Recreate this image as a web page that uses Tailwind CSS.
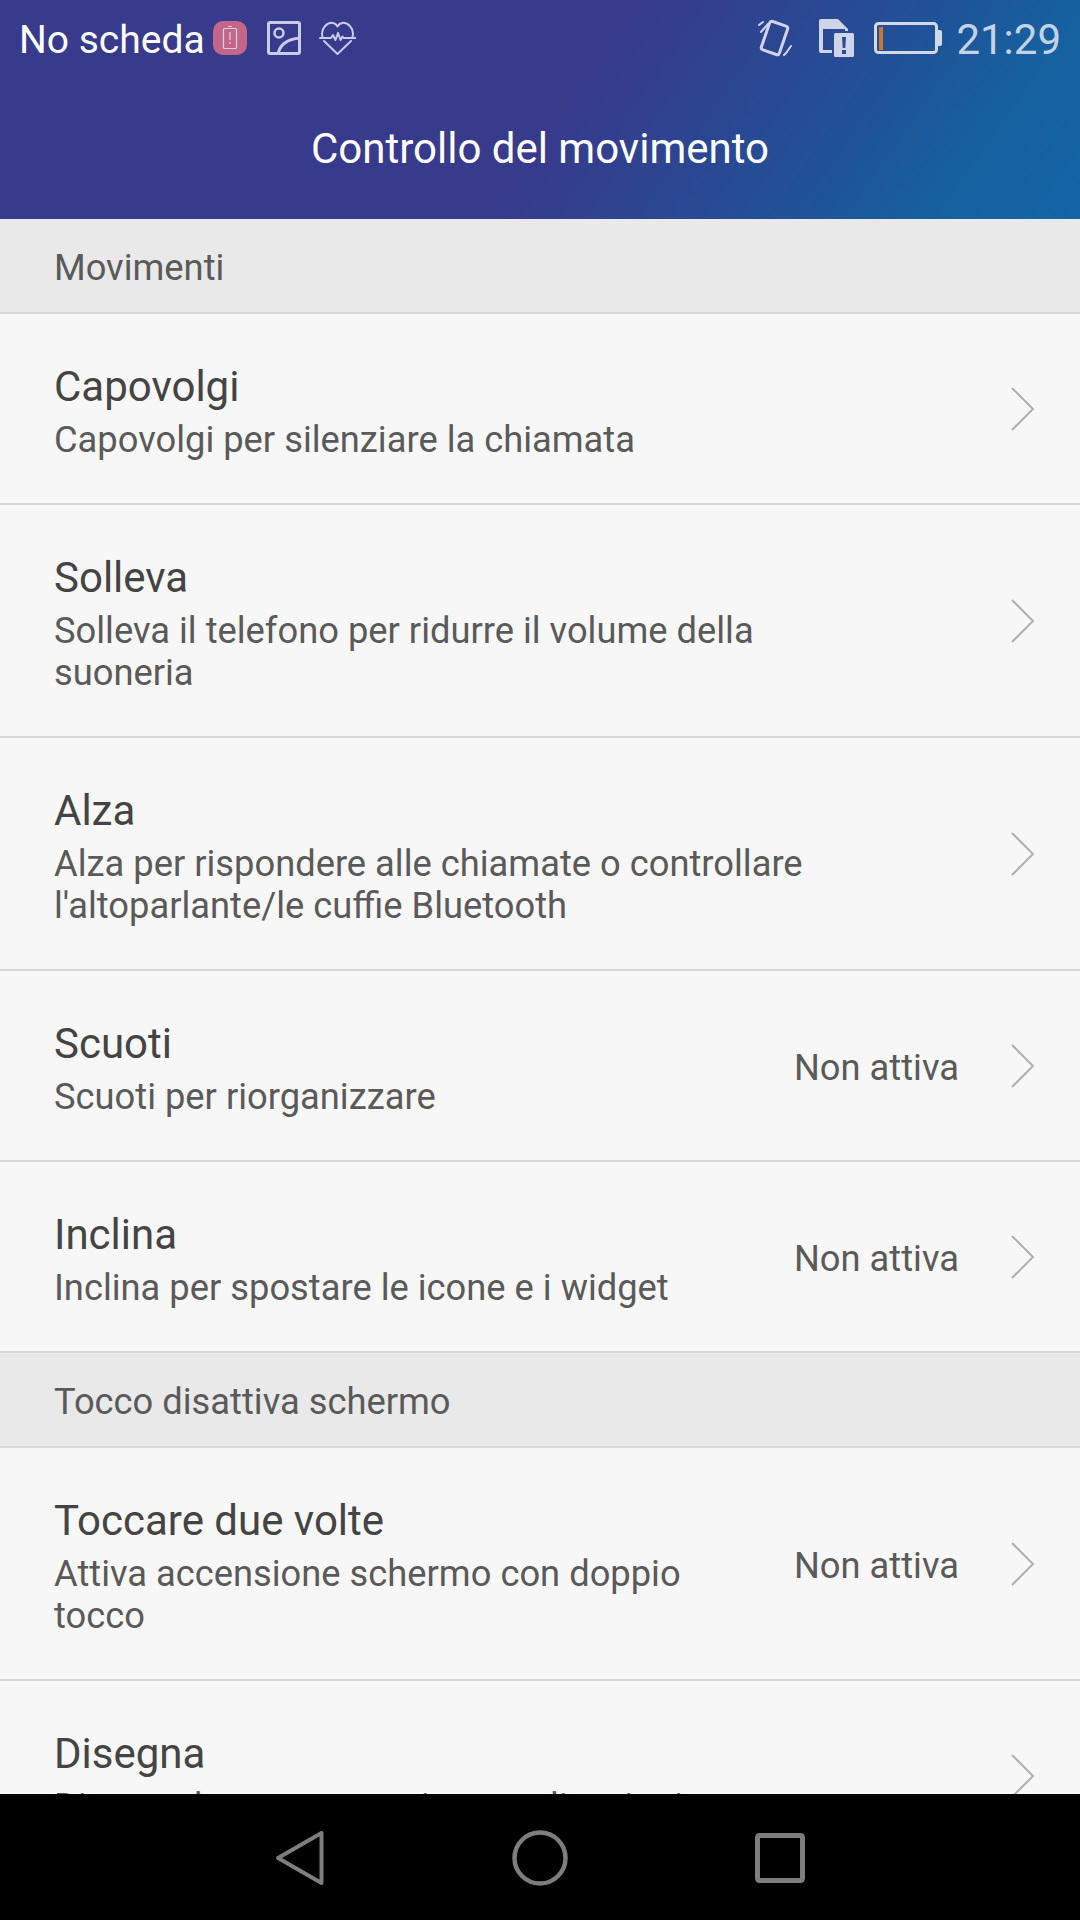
<!DOCTYPE html>
<html>
  <head>
    <meta charset="UTF-8">
    <title>Controllo del movimento</title>
    <script src="https://cdn.jsdelivr.net/npm/@tailwindcss/browser@4"></script>
  </head>
  <body>
    <div class="w-[1080px] h-[1920px] flex flex-col overflow-hidden bg-[#f7f7f7] font-['Roboto',sans-serif]">
      <!-- header -->
      <div class="h-[219px] shrink-0 bg-[linear-gradient(125deg,#383a8c_52%,#274b94_70%,#1e5599_79%,#17609f_87%,#1465a6_100%)]">
        <div class="h-[76px] flex items-center pl-[19px] pr-[19px]">
          <span class="text-[39px] leading-none text-white translate-y-[2px]">No scheda</span>
          <svg class="ml-[8px]" width="34" height="34" viewBox="0 0 34 34" fill="none">
            <rect width="34" height="34" rx="10" fill="#c4668a"/>
            <rect x="10.500" y="7.500" width="13" height="20" rx="1" stroke="#cfd3e8" stroke-width="1.200"/>
            <path d="M15 5.500h4M17 11v8M17 21v2" stroke="#cfd3e8" stroke-width="1.200"/>
          </svg>
          <svg class="ml-[20px]" width="34" height="34" viewBox="0 0 34 34" fill="none" stroke="#c8cce6" stroke-width="3">
            <rect x="1.500" y="1.500" width="31" height="31" rx="1.500"/>
            <circle cx="12" cy="12" r="4.500" stroke-width="2.500"/>
            <path d="M11 33c2-10 10-15 22-16"/>
          </svg>
          <svg class="ml-[18px]" width="37" height="34" viewBox="0 0 37 34" fill="none" stroke="#c8cce6" stroke-width="2" stroke-linecap="round" stroke-linejoin="round">
            <path d="M3.500 16C1 7 9 1 14 2c2 .4 3.500 1.500 4.500 3.500C19.500 3.500 21 2.400 23 2c5-1 13 5 10.500 14M5 20l13.500 13L32 20"/>
            <path d="M1 17h11l2-3 2.500 5 2.500-7 2.500 7 2-3.500 1 1.500h12"/>
          </svg>
          <svg class="ml-auto" width="34" height="40" viewBox="0 0 34 40" fill="none" stroke="#cfd4e8" stroke-linecap="round">
            <rect x="7" y="5" width="19" height="30" rx="2.500" transform="rotate(19 16.500 20)" stroke-width="3"/>
            <path d="M1 7l4-3M3 14l7-8M28 35l5-7M26 37l3-3" stroke-width="2"/>
          </svg>
          <svg class="ml-[27px]" width="35" height="39" viewBox="0 0 35 39">
            <path fill="#cfd4e8" fill-rule="evenodd" d="M2 0h17l10 10v22a2 2 0 0 1-2 2H2a2 2 0 0 1-2-2V2a2 2 0 0 1 2-2zM4 10v21h22V10z"/>
            <rect x="13" y="12" width="22" height="27" rx="2" fill="#294c94"/>
            <rect x="15" y="14" width="20" height="24" rx="1.500" fill="#cfd4e8"/>
            <path fill="#294c94" d="M23 18h4l-.7 11h-2.600zM23 31h4v4h-4z"/>
          </svg>
          <svg class="ml-[20px]" width="68" height="32" viewBox="0 0 68 32" fill="none">
            <rect x="1.500" y="1.500" width="61" height="29" rx="3" stroke="#cfd9ea" stroke-width="3"/>
            <path d="M64 8h2a2 2 0 0 1 2 2v12a2 2 0 0 1-2 2h-2z" fill="#cfd9ea"/>
            <rect x="5" y="5" width="4" height="23" fill="#c87a28"/>
          </svg>
          <span class="ml-[14px] text-[42px] leading-none text-[#c3d3e6] translate-y-[2px]">21:29</span>
        </div>
        <div class="h-[143px] flex items-start justify-center pt-[49px]">
          <span class="text-[42px] leading-[48px] text-white">Controllo del movimento</span>
        </div>
      </div>

      <!-- list -->
      <div class="flex-1 overflow-hidden">
        <div class="h-[95px] flex items-center pl-[54px] pt-[6px] bg-[#e9e9e9] border-b-2 border-[#d8d8d8] text-[36.3px] text-[#5a5a5a]">Movimenti</div>

        <div class="flex items-center pl-[54px] pr-[45px] pt-[47px] pb-[42px] border-b-2 border-[#d8d8d8]">
          <div class="flex-1 max-w-[770px]">
            <div class="text-[42px] leading-[52px] text-[#444444]">Capovolgi</div>
            <div class="mt-[6px] text-[36.3px] leading-[42px] text-[#5a5a5a]">Capovolgi per silenziare la chiamata</div>
          </div>
          <svg class="ml-auto -translate-y-[2px]" width="24" height="44" viewBox="0 0 24 44" fill="none" stroke="#b0b0b0" stroke-width="2"><path d="M1 1l21 21L1 43"/></svg>
        </div>

        <div class="flex items-center pl-[54px] pr-[45px] pt-[47px] pb-[42px] border-b-2 border-[#d8d8d8]">
          <div class="flex-1 max-w-[770px]">
            <div class="text-[42px] leading-[52px] text-[#444444]">Solleva</div>
            <div class="mt-[6px] text-[36.3px] leading-[42px] text-[#5a5a5a]">Solleva il telefono per ridurre il volume della suoneria</div>
          </div>
          <svg class="ml-auto -translate-y-[2px]" width="24" height="44" viewBox="0 0 24 44" fill="none" stroke="#b0b0b0" stroke-width="2"><path d="M1 1l21 21L1 43"/></svg>
        </div>

        <div class="flex items-center pl-[54px] pr-[45px] pt-[47px] pb-[42px] border-b-2 border-[#d8d8d8]">
          <div class="flex-1 max-w-[770px]">
            <div class="text-[42px] leading-[52px] text-[#444444]">Alza</div>
            <div class="mt-[6px] text-[36.3px] leading-[42px] text-[#5a5a5a]">Alza per rispondere alle chiamate o controllare l'altoparlante/le cuffie Bluetooth</div>
          </div>
          <svg class="ml-auto -translate-y-[2px]" width="24" height="44" viewBox="0 0 24 44" fill="none" stroke="#b0b0b0" stroke-width="2"><path d="M1 1l21 21L1 43"/></svg>
        </div>

        <div class="flex items-center pl-[54px] pr-[45px] pt-[47px] pb-[42px] border-b-2 border-[#d8d8d8]">
          <div class="w-[700px]">
            <div class="text-[42px] leading-[52px] text-[#444444]">Scuoti</div>
            <div class="mt-[6px] text-[36.3px] leading-[42px] text-[#5a5a5a]">Scuoti per riorganizzare</div>
          </div>
          <span class="ml-auto text-[36.3px] text-[#5a5a5a]">Non attiva</span>
          <svg class="ml-[52px] -translate-y-[2px]" width="24" height="44" viewBox="0 0 24 44" fill="none" stroke="#b0b0b0" stroke-width="2"><path d="M1 1l21 21L1 43"/></svg>
        </div>

        <div class="flex items-center pl-[54px] pr-[45px] pt-[47px] pb-[42px] border-b-2 border-[#d8d8d8]">
          <div class="w-[700px]">
            <div class="text-[42px] leading-[52px] text-[#444444]">Inclina</div>
            <div class="mt-[6px] text-[36.3px] leading-[42px] text-[#5a5a5a]">Inclina per spostare le icone e i widget</div>
          </div>
          <span class="ml-auto text-[36.3px] text-[#5a5a5a]">Non attiva</span>
          <svg class="ml-[52px] -translate-y-[2px]" width="24" height="44" viewBox="0 0 24 44" fill="none" stroke="#b0b0b0" stroke-width="2"><path d="M1 1l21 21L1 43"/></svg>
        </div>

        <div class="h-[95px] flex items-center pl-[54px] pt-[6px] bg-[#e9e9e9] border-b-2 border-[#d8d8d8] text-[36.3px] text-[#5a5a5a]">Tocco disattiva schermo</div>

        <div class="flex items-center pl-[54px] pr-[45px] pt-[47px] pb-[42px] border-b-2 border-[#d8d8d8]">
          <div class="w-[700px]">
            <div class="text-[42px] leading-[52px] text-[#444444]">Toccare due volte</div>
            <div class="mt-[6px] text-[36.3px] leading-[42px] text-[#5a5a5a]">Attiva accensione schermo con doppio tocco</div>
          </div>
          <span class="ml-auto text-[36.3px] text-[#5a5a5a]">Non attiva</span>
          <svg class="ml-[52px] -translate-y-[2px]" width="24" height="44" viewBox="0 0 24 44" fill="none" stroke="#b0b0b0" stroke-width="2"><path d="M1 1l21 21L1 43"/></svg>
        </div>

        <div class="flex items-center pl-[54px] pr-[45px] pt-[47px] pb-[42px]">
          <div class="flex-1 max-w-[770px]">
            <div class="text-[42px] leading-[52px] text-[#444444]">Disegna</div>
            <div class="mt-[6px] text-[36.3px] leading-[42px] text-[#5a5a5a]">Disegna lettere per avviare applicazioni</div>
          </div>
          <svg class="ml-auto -translate-y-[2px]" width="24" height="44" viewBox="0 0 24 44" fill="none" stroke="#b0b0b0" stroke-width="2"><path d="M1 1l21 21L1 43"/></svg>
        </div>
      </div>

      <!-- nav bar -->
      <div class="h-[126px] shrink-0 bg-black flex items-center pl-[272px] pt-[2px]">
        <svg width="52" height="58" viewBox="0 0 52 58" fill="none" stroke="#7d7d7d" stroke-width="4" stroke-linejoin="round"><path d="M49.500 4v50L6 29z"/></svg>
        <svg class="ml-[188px]" width="56" height="56" viewBox="0 0 56 56" fill="none" stroke="#7d7d7d" stroke-width="4.500"><circle cx="28" cy="28" r="25.500"/></svg>
        <svg class="ml-[186px]" width="52" height="52" viewBox="0 0 52 52" fill="none" stroke="#7d7d7d" stroke-width="5" stroke-linejoin="round"><rect x="3.500" y="3.500" width="45" height="45" rx="2"/></svg>
      </div>
    </div>
  </body>
</html>
